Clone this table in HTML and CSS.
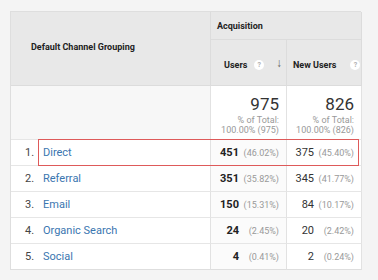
FILE: index.html
```html
<!DOCTYPE html>
<html>
<head>
<meta charset="utf-8">
<link rel="stylesheet" href="styles.css">
</head>
<body>
<div class="report">
  <div class="grid">
    <div class="cell head dim">Default Channel Grouping</div>
    <div class="cell head group">Acquisition</div>
    <div class="cell head metric users">
      <span class="label">Users</span><span class="help">?</span><span class="sort">&#8595;</span>
    </div>
    <div class="cell head metric newusers">
      <span class="label">New Users</span><span class="help">?</span>
    </div>

    <div class="cell total-dim"></div>
    <div class="cell total">
      <div class="big">975</div>
      <div class="sub">% of Total:</div>
      <div class="sub">100.00% (975)</div>
    </div>
    <div class="cell total">
      <div class="big">826</div>
      <div class="sub">% of Total:</div>
      <div class="sub">100.00% (826)</div>
    </div>

    <div class="cell row-dim"><span class="rank">1.</span><a class="name">Direct</a></div>
    <div class="cell val sorted"><b>451</b><span class="pct">(46.02%)</span></div>
    <div class="cell val"><span>375</span><span class="pct">(45.40%)</span></div>

    <div class="cell row-dim"><span class="rank">2.</span><a class="name">Referral</a></div>
    <div class="cell val sorted"><b>351</b><span class="pct">(35.82%)</span></div>
    <div class="cell val"><span>345</span><span class="pct">(41.77%)</span></div>

    <div class="cell row-dim"><span class="rank">3.</span><a class="name">Email</a></div>
    <div class="cell val sorted"><b>150</b><span class="pct">(15.31%)</span></div>
    <div class="cell val"><span>84</span><span class="pct">(10.17%)</span></div>

    <div class="cell row-dim"><span class="rank">4.</span><a class="name">Organic Search</a></div>
    <div class="cell val sorted"><b>24</b><span class="pct">(2.45%)</span></div>
    <div class="cell val"><span>20</span><span class="pct">(2.42%)</span></div>

    <div class="cell row-dim last"><span class="rank">5.</span><a class="name">Social</a></div>
    <div class="cell val sorted last"><b>4</b><span class="pct">(0.41%)</span></div>
    <div class="cell val last"><span>2</span><span class="pct">(0.24%)</span></div>
  </div>
  <div class="highlight"></div>
</div>
</body>
</html>
```

FILE: styles.css
```css
html, body {
  margin: 0;
  padding: 0;
  background: #f4f4f4;
  font-family: Roboto, "Liberation Sans", Arial, sans-serif;
}

body {
  padding: 11px 0 0 10px;
}

.report {
  position: relative;
  width: 351px;
}

.grid {
  display: grid;
  grid-template-columns: 200px 76px 75px;
  grid-template-rows: 28px 46px 54px repeat(5, 26px);
  border-top: 1px solid #dedede;
  border-left: 1px solid #dedede;
  box-sizing: border-box;
}

.cell {
  box-sizing: border-box;
  border-right: 1px solid #e2e2e2;
  border-bottom: 1px solid #e6e6e6;
  display: flex;
  align-items: center;
  color: #333;
}

.head {
  background: #e8e8e8;
  font-weight: 700;
  font-size: 9px;
  color: #222;
  border-color: #dcdcdc;
}

.dim {
  grid-row: 1 / span 2;
  padding-left: 20px;
  padding-bottom: 3px;
}

.group {
  grid-column: 2 / span 2;
  padding-left: 6px;
  padding-top: 1px;
}

.metric {
  padding-left: 13px;
  padding-top: 4px;
}

.newusers {
  padding-left: 6px;
}

.label {
  white-space: nowrap;
}

.help {
  width: 10px;
  height: 10px;
  border-radius: 50%;
  background: #ffffff;
  color: #b0b0b0;
  font-size: 7px;
  font-weight: 700;
  display: inline-flex;
  align-items: center;
  justify-content: center;
  margin-left: 7px;
}

.newusers .help {
  margin-left: 14px;
}

.sort {
  margin-left: auto;
  margin-right: 4px;
  font-size: 12px;
  font-weight: 700;
  color: #666;
  margin-top: -3px;
}

.total-dim {
  background: #f7f7f7;
}

.total {
  background: #fff;
  flex-direction: column;
  align-items: flex-end;
  justify-content: flex-start;
  padding: 9px 7px 0 0;
}

.total .big {
  font-size: 17px;
  line-height: 19px;
  color: #333;
  margin-bottom: 1px;
}

.total .sub {
  font-size: 9px;
  line-height: 10px;
  color: #999;
  white-space: nowrap;
}

.row-dim {
  background: #fff;
  font-size: 11px;
}

.rank {
  width: 18px;
  padding-left: 14px;
  color: #444;
}

.name {
  color: #3a76b0;
}

.val {
  background: #fff;
  justify-content: flex-end;
  padding-right: 7px;
  font-size: 11px;
  color: #333;
}

.val.sorted {
  background: #fbfbfb;
}

.val b {
  font-weight: 700;
  color: #222;
}

.pct {
  width: 40px;
  text-align: right;
  font-size: 9px;
  color: #999;
}

.last {
  border-bottom-color: #dedede;
}

.highlight {
  position: absolute;
  left: 28px;
  top: 128px;
  width: 321px;
  height: 27px;
  box-sizing: border-box;
  border: 1px solid #de5a5a;
  pointer-events: none;
}
```
